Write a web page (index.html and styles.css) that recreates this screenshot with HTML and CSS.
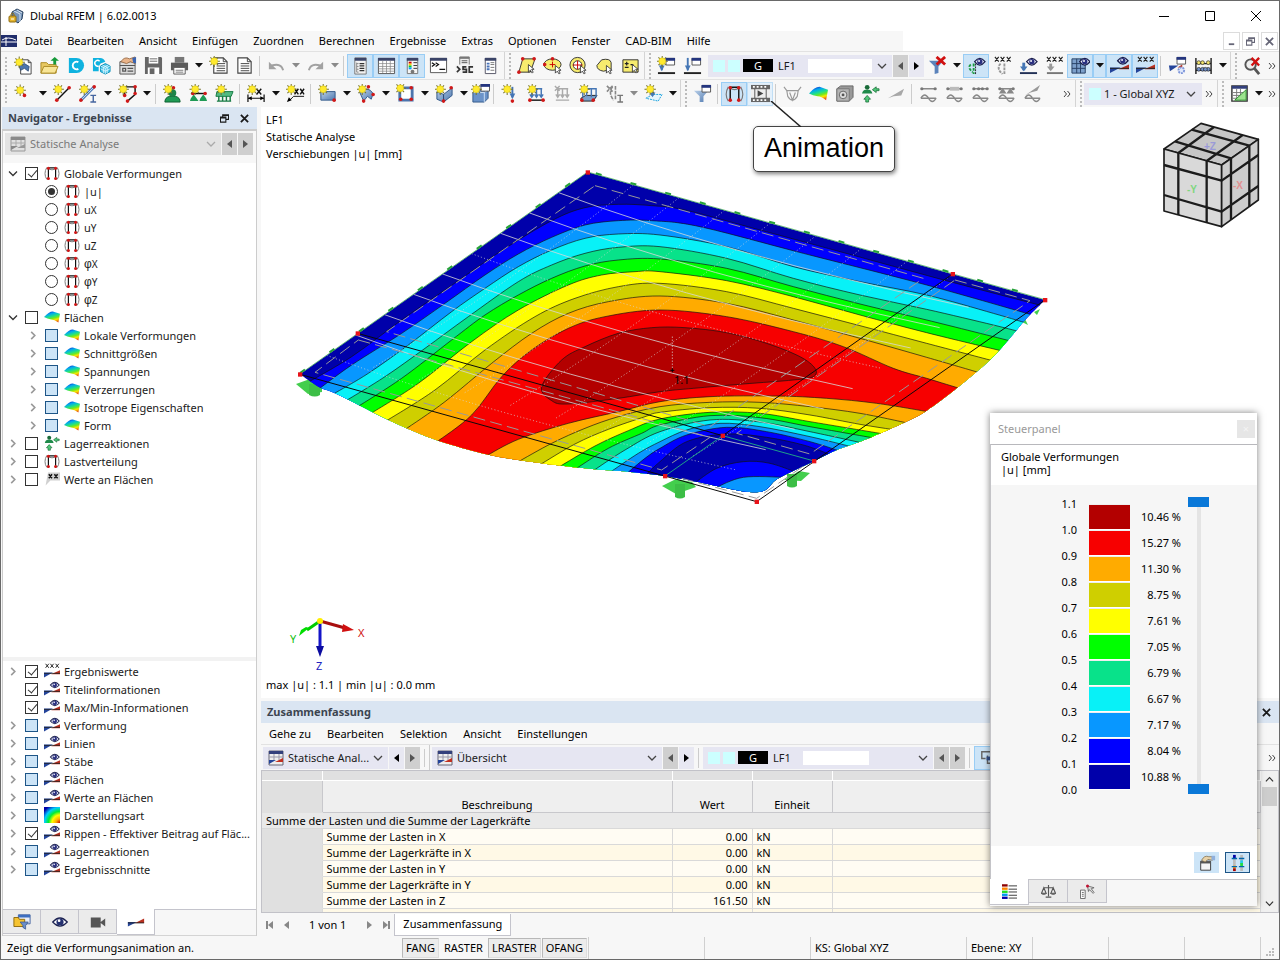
FILE: index.html
```html
<!DOCTYPE html>
<html lang="de">
<head>
<meta charset="utf-8">
<title>Dlubal RFEM | 6.02.0013</title>
<link rel="stylesheet" href="styles.css">
</head>
<body>
<svg class="defs" aria-hidden="true">
  <defs>
    <linearGradient id="steel" x1="0" y1="0" x2="1" y2="1"><stop offset="0" stop-color="#b9cfe8"/><stop offset="1" stop-color="#4f79b0"/></linearGradient>
    <linearGradient id="rain" x1=".3" y1="0" x2=".7" y2="1"><stop offset="0" stop-color="#1030c8"/><stop offset=".22" stop-color="#00a8f0"/><stop offset=".45" stop-color="#1fe08a"/><stop offset=".62" stop-color="#6fe820"/><stop offset=".78" stop-color="#f8e800"/><stop offset="1" stop-color="#e84a10"/></linearGradient>
    <radialGradient id="rainr" cx="1" cy="1" r="1.25"><stop offset="0" stop-color="#c00"/><stop offset=".2" stop-color="#fa0"/><stop offset=".4" stop-color="#ff0"/><stop offset=".58" stop-color="#0e3"/><stop offset=".78" stop-color="#0cf"/><stop offset="1" stop-color="#00a"/></radialGradient>
    <g id="star"><path d="M5.500-.5v12M-.5 5.500h12M1.500 1.500l8 8M9.500 1.500l-8 8" stroke="#77732f" stroke-width="1.100"/><circle cx="5.500" cy="5.500" r="3.600" fill="#ffea2e" stroke="#d8c51a" stroke-width=".6"/></g>
    <g id="eye"><path d="M0 4Q5.500-3 11 4Q5.500 11 0 4z" fill="#e6e9f8" stroke="#1b1f4c" stroke-width="1.300"/><circle cx="5.500" cy="4" r="2.800" fill="#2a3080"/><circle cx="4.700" cy="3.200" r="1" fill="#fff"/></g>
    <g id="win"><path d="M.5.5h9v7h-9z" fill="#fff" stroke="#555"/><path d="M0 0h10v3H0z" fill="#24357e"/></g>
    <g id="cur"><path d="M0 0v8l2-2 2 3 1-1-1.500-3H6z" fill="#fff" stroke="#333" stroke-width=".9"/></g>
    <g id="rd"><circle r="1.900" fill="#d01818"/></g>
  </defs>
  <symbol id="i-app" viewBox="0 0 16 16"><path d="M4 4l5-3 6 3-1 7-4 4-6-4z" fill="#7694b8" stroke="#27405f"/><path d="M6 3l6 3v8M9 2l5 3" fill="none" stroke="#d6e3f1"/><rect x="1" y="8" width="7" height="6" rx="1" fill="#e4b52e" stroke="#8d6a10"/><path d="M3 8V6q1.500-2 3 0v2" fill="none" stroke="#8d6a10"/><path d="M3 11h3" stroke="#fff"/></symbol>
  <symbol id="i-mdi" viewBox="0 0 16 12"><path d="M0 0h16v12H0z" fill="#202d6b"/><path d="M0 7h16M5 2v9M1 5q6-4 14 0" fill="none" stroke="#fff" stroke-width="1"/></symbol>
  <symbol id="i-new" viewBox="0 0 20 20"><path d="M7 4h8l3 3v12H7z" fill="#fff" stroke="#444"/><path d="M15 4v3h3" fill="none" stroke="#444"/><path d="M5 10l6-2 5 3-1 5-4-3-4 2z" fill="#4c75ad" stroke="#27466f" stroke-width=".8"/><use href="#star" x="0" y="1"/></symbol>
  <symbol id="i-open" viewBox="0 0 20 20"><path d="M1 18V7h6l2 2h8v9z" fill="#e8c963" stroke="#ab8a24"/><path d="M1 18l3-7h15l-3 7z" fill="#f8e596" stroke="#ab8a24"/><path d="M14 9V5h-3l4.500-4L20 5h-3v4z" fill="#169a3a"/></symbol>
  <symbol id="i-dl" viewBox="0 0 20 20"><path d="M3 2h8a8 8 0 0 1 0 16H3z" fill="#0fb2df"/><path d="M13 6.500a4 4 0 1 0 0 7" fill="none" stroke="#fff" stroke-width="2"/></symbol>
  <symbol id="i-dlc" viewBox="0 0 20 20"><path d="M1 2h7a6 6 0 0 1 6 4L9 8l-2 3v5H1z" fill="#0fb2df"/><path d="M8 5.500a3 3 0 1 0-1 5" fill="none" stroke="#fff" stroke-width="1.500"/><path d="M14 8l5 2.500v6L14 19l-5-2.500v-6z" fill="#4cc6ea" stroke="#0a8fb8"/><path d="M9 10.500l5 2.500 5-2.500M14 13v6M11 9.500l5 2.500v6M17 9.500l-5 2.500v6M9 13.500l5 2.500 5-2.500" fill="none" stroke="#e9faff" stroke-width=".8"/></symbol>
  <symbol id="i-block" viewBox="0 0 20 20"><path d="M2 6h16v13H2z" fill="#ddd" stroke="#555"/><path d="M2 10h16M5 13h3v3H5zM10 13h6M10 16h6" fill="none" stroke="#555" stroke-width="1.300"/><path d="M3 6Q7 0 12 3l6-2v7l-5-2-4 2z" fill="#e9b48a" stroke="#8a5a34" stroke-width=".8"/><path d="M15 2l4-1v7l-3-1z" fill="#3a65b2"/></symbol>
  <symbol id="i-save" viewBox="0 0 20 20"><path d="M1 1h17l1 1v17H1z" fill="#666"/><path d="M5 1h10v7H5zM4 12h12v7H4z" fill="#fff"/><path d="M6 3h8M6 5.500h8" stroke="#666"/><path d="M6 13h5v6H6z" fill="#666"/></symbol>
  <symbol id="i-print" viewBox="0 0 20 20"><path d="M5 1h10v6H5z" fill="#777"/><path d="M1 7h18v8H1z" fill="#5b5b5b"/><path d="M4 12h12v7H4z" fill="#fff" stroke="#5b5b5b"/><path d="M6 15h8M6 17h8" stroke="#777"/></symbol>
  <symbol id="i-rep" viewBox="0 0 20 20"><path d="M3 2h10l4 4v12H3z" fill="#fff" stroke="#444" stroke-width="1.200"/><path d="M13 2v4h4M6 8h9M6 10.500h9M6 13h9M6 15.500h9" fill="none" stroke="#444"/></symbol>
  <symbol id="i-newrep" viewBox="0 0 20 20"><use href="#i-rep" x="2" width="20" height="20"/><use href="#star" y="0"/></symbol>
  <symbol id="i-undo" viewBox="0 0 20 20"><path d="M17 15Q15 7 5 10" fill="none" stroke="#a2a2a2" stroke-width="2"/><path d="M2 6v8h8z" fill="#a2a2a2"/></symbol>
  <symbol id="i-redo" viewBox="0 0 20 20"><path d="M3 15Q5 7 15 10" fill="none" stroke="#a2a2a2" stroke-width="2"/><path d="M18 6v8h-8z" fill="#a2a2a2"/></symbol>
  <symbol id="i-nav" viewBox="0 0 20 20"><path d="M4 2h12v17H4z" fill="#f2f2f2" stroke="#777"/><path d="M4 2h12v3H4z" fill="#3b4468"/><path d="M6 7v10M6 8h2M6 11h2M6 14h2M6 17h2" stroke="#888"/><path d="M9 8h5M9 10.500h5M9 13h5M9 15.500h5" stroke="#333" stroke-width="1.300"/></symbol>
  <symbol id="i-tbl" viewBox="0 0 20 20"><path d="M1.500 2.500h17v16h-17z" fill="#fff" stroke="#555"/><path d="M1 2h18v3H1z" fill="#3b4468"/><path d="M2 8h16M2 11h16M2 13.500h16M2 16h16M6 5v13M10 5v13M14 5v13" stroke="#888" stroke-width=".8"/></symbol>
  <symbol id="i-pan" viewBox="0 0 20 20"><path d="M4.500 2.500h11v16h-11z" fill="#f4f4f4" stroke="#777"/><path d="M4 2h12v3H4z" fill="#3b4468"/><path d="M6 6h3v2H6z" fill="#c00"/><path d="M6 8h3v2H6z" fill="#fc0"/><path d="M6 10h3v2H6z" fill="#0c3"/><path d="M6 12h3v2H6z" fill="#09f"/><path d="M11 7h4M11 10h4M11 13h4" stroke="#333"/><circle cx="10" cy="16.500" r="2" fill="#777"/></symbol>
  <symbol id="i-con" viewBox="0 0 20 20"><path d="M1.500 2.500h17v15h-17z" fill="#fff" stroke="#555"/><path d="M1 2h18v3H1z" fill="#3b4468"/><path d="M3 7l3 2-3 2M7 7l3 2-3 2M11 14h6" fill="none" stroke="#111" stroke-width="1.300"/></symbol>
  <symbol id="i-sc" viewBox="0 0 20 20"><path d="M5 1h10v9H5z" fill="#eee" stroke="#777"/><path d="M5 1h10v2H5z" fill="#777"/><path d="M7 5h6M7 7h6" stroke="#555"/><path d="M0 9h20v10H0z" fill="#f4f4f4"/><path d="M2 11l3 3-3 3M12 11.500H8.500v2.500H12v3H8M19 11.500h-4V17h4" fill="none" stroke="#333" stroke-width="1.800"/></symbol>
  <symbol id="i-list" viewBox="0 0 20 20"><path d="M4.500 2.500h11v16h-11z" fill="#fff" stroke="#556"/><path d="M4 2h12v3H4z" fill="#3b4468"/><path d="M6 8h3M6 11h3M6 14h3" stroke="#4973b8" stroke-width="2"/><path d="M10 7h4M10 9h4M10 12h4M10 15h4" stroke="#777"/></symbol>
  <symbol id="i-s1" viewBox="0 0 20 20"><path d="M6 3h13l-5 14H2z" fill="#f7ec6e" stroke="#333"/><use href="#rd" x="6" y="3"/><use href="#rd" x="18" y="3"/><use href="#rd" x="2" y="17"/><use href="#cur" x="12" y="9"/></symbol>
  <symbol id="i-s2" viewBox="0 0 20 20"><ellipse cx="10" cy="9" rx="9" ry="6" fill="#f7ec6e" stroke="#333"/><path d="M7 9h6M10 6v6" stroke="#c00"/><use href="#rd" x="10" y="3"/><use href="#rd" x="1.800" y="9"/><use href="#cur" x="13" y="10"/></symbol>
  <symbol id="i-s3" viewBox="0 0 20 20"><circle cx="9" cy="9.500" r="8" fill="#f7ec6e" stroke="#333"/><circle cx="9" cy="9.500" r="4.500" fill="#fff" stroke="#333"/><path d="M4 9.500h10M9 5v9" stroke="#c00"/><use href="#cur" x="12" y="10"/></symbol>
  <symbol id="i-s4" viewBox="0 0 20 20"><path d="M2 10l5-6q9-2 10 3v7l-8 2q-7-1-7-6z" fill="#f7ec6e" stroke="#333"/><use href="#cur" x="12" y="10"/></symbol>
  <symbol id="i-s5" viewBox="0 0 20 20"><path d="M2 4h16v13H2z" fill="#f7ec6e" stroke="#333"/><path d="M4 8h4M6 6v4M4 12h4M10 9h3" stroke="#222" stroke-width="1.300"/><use href="#cur" x="12" y="9"/></symbol>
  <symbol id="i-ld" viewBox="0 0 20 20"><path d="M1 18h18" stroke="#222" stroke-width="2"/><path d="M5 2v13" stroke="#4576b5" stroke-width="2"/><path d="M2 10h6l-3 6z" fill="#4576b5"/><use href="#win" x="9" y="2"/></symbol>
  <symbol id="i-ldn" viewBox="0 0 20 20"><use href="#i-ld" width="20" height="20"/><use href="#star" y="0"/></symbol>
  <symbol id="i-fx" viewBox="0 0 20 20"><path d="M1 5h15l-5 6v7l-4 1v-8z" fill="#5b83bb"/><path d="M9 1l9 8M18 1L9 9" stroke="#d01010" stroke-width="3"/></symbol>
  <symbol id="i-f" viewBox="0 0 20 20"><path d="M1 7h15l-5 6v6H7v-6z" fill="url(#steel)"/><use href="#win" x="9" y="1"/></symbol>
  <symbol id="i-em" viewBox="0 0 20 20"><path d="M4 9q-4 3 2 8M7 8v11" fill="none" stroke="#1a9a40" stroke-width="2" stroke-dasharray="3 1.500"/><path d="M9 8v11" stroke="#222" stroke-dasharray="2 1"/><use href="#eye" x="8" y="2"/></symbol>
  <symbol id="x3" viewBox="0 0 20 7"><path d="M2 1l4 5M6 1L2 6M8 1l4 5M12 1L8 6M14.500 1l4 5M18.500 1l-4 5" stroke="#222" stroke-width="1.200"/></symbol>
  <symbol id="i-xm" viewBox="0 0 20 20"><use href="#x3" width="20" height="7"/><path d="M8 8q-5 5 2 11M12 8v11" fill="none" stroke="#999" stroke-width="2" stroke-dasharray="3 1"/></symbol>
  <symbol id="i-el" viewBox="0 0 20 20"><path d="M1 18h18" stroke="#223056" stroke-width="2"/><path d="M5 7v8" stroke="#4576b5" stroke-width="3"/><path d="M1 11h8l-4 5z" fill="#4576b5"/><use href="#eye" x="8" y="2"/></symbol>
  <symbol id="i-xl" viewBox="0 0 20 20"><use href="#x3" width="20" height="7"/><path d="M2 18h17" stroke="#777" stroke-width="2"/><path d="M6 8v6" stroke="#999" stroke-width="3"/><path d="M2 11h8l-4 5z" fill="#999"/></symbol>
  <symbol id="i-ge" viewBox="0 0 20 20"><path d="M1 3h14v15H1z" fill="#7ca0cb" stroke="#274064"/><path d="M1 8h14M1 13h14M6 3v15M10 3v15" stroke="#274064"/><use href="#eye" x="9" y="2"/></symbol>
  <symbol id="i-re" viewBox="0 0 20 20"><path d="M0 12h11l-11 6z" fill="#24449a"/><path d="M9 14l11-5v5z" fill="#b83020"/><path d="M0 13h20" stroke="#222"/><use href="#eye" x="8" y="1"/></symbol>
  <symbol id="i-rx" viewBox="0 0 20 20"><path d="M0 12h11l-11 6z" fill="#24449a"/><path d="M9 14l11-5v5z" fill="#b83020"/><path d="M0 13h20" stroke="#222"/><use href="#x3" y="0" width="20" height="7"/></symbol>
  <symbol id="i-tri" viewBox="0 0 20 20"><path d="M1 10h10L1 15z" fill="#24449a"/><path d="M9 11l10-5v5z" fill="#b83020"/><path d="M1 11h18" stroke="#222"/></symbol>
  <symbol id="i-wiz" viewBox="0 0 20 20"><use href="#win" x="9" y="1"/><path d="M1 10h10l-9 6z" fill="#24449a"/><path d="M10 12l5-3v3z" fill="#b83020"/><circle cx="14" cy="15" r="3" fill="#dfe8fb" stroke="#7e96da" stroke-width="2" stroke-dasharray="2 1"/></symbol>
  <symbol id="i-aba" viewBox="0 0 20 20"><path d="M2 2v17M18 2v17M2 8h16M2 15h16" stroke="#222" stroke-width="1.500"/><g stroke="#222" stroke-width=".7"><g fill="#f2e36a"><circle cx="5" cy="7" r="2"/><circle cx="9" cy="7" r="2"/><circle cx="15" cy="7" r="2"/></g><g fill="#7190c8"><circle cx="5" cy="14" r="2"/><circle cx="9" cy="14" r="2"/><circle cx="15" cy="14" r="2"/><circle cx="12" cy="14" r="2"/></g></g></symbol>
  <symbol id="i-mag" viewBox="0 0 20 20"><circle cx="8" cy="9" r="5.500" fill="#eee" stroke="#555" stroke-width="2"/><path d="M12 13l5 6" stroke="#555" stroke-width="3"/><path d="M9 2l8 8M17 2L9 10" stroke="#d01010" stroke-width="2.500"/></symbol>

  <symbol id="i-n" viewBox="0 0 20 20"><use href="#star" x="1" y="1"/><use href="#rd" x="11" y="12"/></symbol>
  <symbol id="i-l" viewBox="0 0 20 20"><path d="M4 17L17 4" stroke="#111" stroke-width="1.500"/><use href="#rd" x="4" y="17"/><use href="#rd" x="17" y="4"/><use href="#star" y="0"/></symbol>
  <symbol id="i-m" viewBox="0 0 20 20"><path d="M2 17L16 3" stroke="#4e7cba" stroke-width="3"/><path d="M2 17L16 3" stroke="#cfe0f5"/><use href="#rd" x="16" y="3"/><use href="#rd" x="2" y="17"/><path d="M12 12h6M15 12v7M12 19h6" stroke="#4565a0" stroke-width="1.500"/><use href="#star" y="0"/></symbol>
  <symbol id="i-p" viewBox="0 0 20 20"><path d="M7 12V3h11v8l-8 7" fill="none" stroke="#111" stroke-width="1.500"/><use href="#rd" x="7" y="12"/><use href="#rd" x="18" y="3"/><use href="#rd" x="18" y="10"/><use href="#rd" x="10" y="18"/><use href="#star" y="0"/></symbol>
  <symbol id="i-u1" viewBox="0 0 20 20"><path d="M2 19q0-5 5-6h6q5 1 5 6z" fill="#1f9a55" stroke="#0c5e30"/><circle cx="10" cy="9.500" r="4" fill="#1d8449"/><use href="#rd" x="11" y="4"/><use href="#star" y="0"/></symbol>
  <symbol id="i-u2" viewBox="0 0 20 20"><path d="M2 10h16" stroke="#111" stroke-width="1.500"/><path d="M5 11l3 4 2 3H1l1-3zM15 11l3 4 1 3h-8l1-3z" fill="#1f9a55"/><use href="#rd" x="4" y="10"/><use href="#rd" x="17" y="10"/><use href="#star" x="1"/></symbol>
  <symbol id="i-u3" viewBox="0 0 20 20"><path d="M2 8h17l-2 5H1z" fill="#53bb82" stroke="#167a43"/><path d="M4 13v5M8 13v5M12 13v5M16 13v5M2 18h15" stroke="#167a43" stroke-width="1.500"/><use href="#star" x="1"/></symbol>
  <symbol id="i-dim" viewBox="0 0 20 20"><path d="M1 11v8M18 11v8M1 15h17" stroke="#111" stroke-width="1.300"/><path d="M1 15l4-2v4zM18 15l-4-2v4z"/><path d="M10 5l5 6M15 5l-5 6" stroke="#111" stroke-width="1.500"/><use href="#star" x="0"/></symbol>
  <symbol id="i-xx" viewBox="0 0 20 20"><path d="M3 18L8 13h11" fill="none" stroke="#111"/><path d="M1 19l2-5 3 3z"/><path d="M9 5l4 6M13 5l-4 6M15 5l4 6M19 5l-4 6" stroke="#111" stroke-width="1.500"/><use href="#star" x="0"/></symbol>
  <symbol id="i-f1" viewBox="0 0 20 20"><path d="M3 8h15v9H3z" fill="url(#steel)" stroke="#33588a"/><use href="#rd" x="17" y="17"/><use href="#star" x="0" y="0"/></symbol>
  <symbol id="i-f2" viewBox="0 0 20 20"><path d="M3 9q8-8 14 1l-2 6-4-3-4 5z" fill="url(#steel)" stroke="#33588a"/><use href="#rd" x="12" y="3"/><use href="#rd" x="17" y="11"/><use href="#rd" x="7" y="18"/><use href="#star" y="0"/></symbol>
  <symbol id="i-f3" viewBox="0 0 20 20"><path d="M4 4h13v13H4z" fill="#fff" stroke="#4c75ad" stroke-width="3"/><use href="#rd" x="16" y="4"/><use href="#rd" x="16" y="16"/><use href="#rd" x="5" y="16"/><use href="#star" x="-1" y="-1"/></symbol>
  <symbol id="i-f4" viewBox="0 0 20 20"><path d="M2 8l7 3 9-7v8l-9 7-7-3z" fill="url(#steel)" stroke="#33588a"/><path d="M9 11v8" stroke="#24446f"/><use href="#rd" x="17" y="4"/><use href="#rd" x="9" y="18"/><use href="#star" y="0"/></symbol>
  <symbol id="i-f5" viewBox="0 0 20 20"><path d="M2 9l4-3h12v9l-4 4H2z" fill="#6b93c9" stroke="#33588a"/><path d="M2 9h12v10M14 9l4-3" fill="none" stroke="#cfe0f5"/><use href="#win" x="10" y="0"/><use href="#star" y="0"/></symbol>
  <symbol id="i-a1" viewBox="0 0 20 20"><path d="M12 3v11" stroke="#4576b5" stroke-width="2"/><path d="M9 10h6l-3 6z" fill="#4576b5"/><use href="#rd" x="12" y="18"/><use href="#star" x="1" y="0"/></symbol>
  <symbol id="i-a2" viewBox="0 0 20 20"><path d="M3 17h14" stroke="#111" stroke-width="1.500"/><path d="M4 5h12M5 5v8M10 5v8M15 5v8M3 11l2 3 2-3M8 11l2 3 2-3M13 11l2 3 2-3" fill="none" stroke="#4576b5" stroke-width="1.500"/><use href="#rd" x="3" y="17"/><use href="#rd" x="17" y="17"/><use href="#star" y="0"/></symbol>
  <symbol id="i-a3" viewBox="0 0 20 20"><path d="M3 17h14M4 5h12M5 5v8M10 5v8M15 5v8M3 11l2 3 2-3M8 11l2 3 2-3M13 11l2 3 2-3M2 2l5 5M7 2L2 7" fill="none" stroke="#aaa" stroke-width="1.500"/></symbol>
  <symbol id="i-a4" viewBox="0 0 20 20"><path d="M2 15l5-3h12l-4 6H3z" fill="#7ca0cb" stroke="#222"/><path d="M4 5h14v9M8 5v8M13 5v9M4 5v9" fill="none" stroke="#4576b5" stroke-width="1.500"/><use href="#rd" x="3" y="17"/><use href="#rd" x="15" y="17"/><use href="#star" y="0"/></symbol>
  <symbol id="i-a5" viewBox="0 0 20 20"><path d="M8 3q-5 6 1 14M11 2v15M2 2l6 6M8 2L2 8" fill="none" stroke="#888" stroke-width="1.700" stroke-dasharray="4 1"/><path d="M13 12h6M16 12v7M13 19h6" stroke="#777" stroke-width="1.500"/></symbol>
  <symbol id="i-a6" viewBox="0 0 20 20"><path d="M2 15l7-4h10l-4 7z" fill="#e6f5fd" stroke="#16a0dd" stroke-dasharray="2 1"/><path d="M9 4v8" stroke="#4576b5" stroke-width="2"/><path d="M6 9h6l-3 5z" fill="#4576b5"/><use href="#star" x="1" y="0"/></symbol>
  <symbol id="i-def" viewBox="0 0 20 20"><path d="M5.500 18V3.500h9V18" fill="none" stroke="#111" stroke-width="1.500"/><path d="M3.500 3Q-1 11 3.500 18M16.500 3q4.500 8 0 15M5 4q5 4 10 0" fill="none" stroke="#777" stroke-width="1.200"/><use href="#rd" x="5.500" y="4"/><use href="#rd" x="14.500" y="4"/><use href="#rd" x="5.500" y="17"/><use href="#rd" x="14.500" y="17"/></symbol>
  <symbol id="i-film" viewBox="0 0 20 20"><path d="M0 1h20v18H0z" fill="#666"/><path d="M2 3h2M6 3h2M10 3h2M14 3h2M2 17h2M6 17h2M10 17h2M14 17h2" stroke="#fff" stroke-width="2"/><path d="M0 5.500h20v9H0z" fill="#eee"/><path d="M4 5v10M16 5v10" stroke="#555"/><path d="M7 6.500v7l6-3.500z" fill="#444"/></symbol>
  <symbol id="i-dg" viewBox="0 0 20 20"><path d="M1 3l3 4h12l3-4M4 7l1 6q5 8 10 0l1-6M7 9l3 8 3-8" fill="none" stroke="#999" stroke-width="1.200"/></symbol>
  <symbol id="i-rain" viewBox="0 0 20 20"><path d="M0 10Q6 3 11 3L20 6l-2 11q-5-4-9-4-5-1-9-3z" fill="url(#rain)"/></symbol>
  <symbol id="i-rr" viewBox="0 0 20 20"><path d="M0 0h20v20H0z" fill="url(#rainr)"/></symbol>
  <symbol id="i-die" viewBox="0 0 20 20"><path d="M2 5l4-3h13v12l-4 4H2z" fill="#999" stroke="#666"/><path d="M2 5h13v13H2z" fill="#b4b4b4" stroke="#777"/><circle cx="8.500" cy="11.500" r="4" fill="#ddd" stroke="#666"/><circle cx="8.500" cy="11.500" r="1.500" fill="#555"/></symbol>
  <symbol id="i-rc" viewBox="0 0 20 20"><path d="M1 10q1-4 4-4h3q3 0 4 4z" fill="#1f8a4a"/><circle cx="6.500" cy="3.500" r="2.500" fill="#196b39"/><path d="M5 19v-3H3l3.500-4 3.500 4H8v3z" fill="#4fc878" stroke="#156c35" stroke-width=".8"/><path d="M19 5h-3V3l-4 3 4 3V7h3z" fill="#4fc878" stroke="#156c35" stroke-width=".8"/></symbol>
  <symbol id="i-wg" viewBox="0 0 20 20"><path d="M1 15L18 5l-3 7-8 1z" fill="#a8a8a8"/></symbol>
  <symbol id="i-g1" viewBox="0 0 20 20"><path d="M3 5h14M2 15h16" stroke="#888" stroke-width="1.500"/><circle cx="3" cy="5" r="1.700" fill="#777"/><circle cx="17" cy="5" r="1.700" fill="#777"/><path d="M2 15q4-7 8 0t8 0" fill="none" stroke="#888" stroke-width="1.500"/></symbol>
  <symbol id="i-g2" viewBox="0 0 20 20"><use href="#i-g1" width="20" height="20"/><path d="M5 5h10" stroke="#bbb" stroke-width="4"/></symbol>
  <symbol id="i-g3" viewBox="0 0 20 20"><use href="#i-g1" width="20" height="20"/><circle cx="8" cy="5" r="1.700" fill="#777"/><circle cx="12" cy="5" r="1.700" fill="#777"/></symbol>
  <symbol id="i-g4" viewBox="0 0 20 20"><use href="#i-g1" width="20" height="20"/><path d="M6 4l4 6H2zM14 4l4 6h-8z" fill="#888"/></symbol>
  <symbol id="i-g5" viewBox="0 0 20 20"><path d="M2 12L18 1l-3 6-7 2z" fill="#999"/><path d="M2 15h16M2 15q4-7 8 0t8 0" fill="none" stroke="#888" stroke-width="1.500"/></symbol>
  <symbol id="i-ch" viewBox="0 0 20 20"><path d="M2 2h16v16H2z" fill="#fff" stroke="#333" stroke-width="1.500"/><path d="M2 2h16v3H2z" fill="#33407c"/><path d="M3 9h14M3 12h14M3 15h14M7 5v13M11 5v13" stroke="#777"/><path d="M5 17h12V6z" fill="#9be48d" stroke="#2c8a2c"/></symbol>
  <symbol id="i-res" viewBox="0 0 16 16"><path d="M1 1h14v14H1z" fill="#eee" stroke="#667"/><path d="M1 1h14v3H1z" fill="#33407c"/><path d="M1 7h14M6 4v6M11 4v6" stroke="#99a"/><path d="M1 14V10h7z" fill="#24449a"/><path d="M7 12l8-4v4z" fill="#c03020"/></symbol>
  <symbol id="i-resg" viewBox="0 0 16 16"><path d="M1 1h14v14H1z" fill="#e0e0e0" stroke="#999"/><path d="M1 1h14v3H1z" fill="#8a8a8a"/><path d="M1 7h14M6 4v6M11 4v6" stroke="#aaa"/><path d="M1 14V10h7z" fill="#888"/><path d="M7 12l8-4v4z" fill="#999"/></symbol>
  <symbol id="i-val" viewBox="0 0 20 20"><path d="M5 2h15v10H8l-6 6z" fill="#d0d0d0"/><path d="M6 4l4 5M10 4L6 9M13 4l4 5M17 4l-4 5" stroke="#111" stroke-width="1.800"/></symbol>
  <symbol id="i-t1" viewBox="0 0 20 20"><path d="M6 2h13v10H6z" fill="#e9eef8" stroke="#3d5f9c"/><path d="M6 2h13v3H6z" fill="#3d6ec0"/><path d="M1 5h5l1 2h6v8H1z" fill="#f5c331" stroke="#8a6508"/><path d="M8 10h9l-3 4v4l-3-2v-2z" fill="#6c8fca" stroke="#35548c" stroke-width=".8"/></symbol>
  <symbol id="i-t2" viewBox="0 0 20 20"><path d="M2 10q8-9 16 0q-8 9-16 0z" fill="#fff" stroke="#1b2150" stroke-width="1.500"/><circle cx="10" cy="10" r="4" fill="#243070"/><circle cx="9" cy="8.500" r="1.500" fill="#fff"/></symbol>
  <symbol id="i-t3" viewBox="0 0 20 20"><path d="M2 5h11v11H2zM13 10l5-4v9l-5-4z" fill="#555"/></symbol>
  <symbol id="i-leg" viewBox="0 0 16 16"><path d="M0 1.500h6" stroke="#8c0000" stroke-width="2.500"/><path d="M0 5h6" stroke="#f80" stroke-width="2.500"/><path d="M0 8.300h6" stroke="#2d2" stroke-width="2.500"/><path d="M0 11.500h6" stroke="#09e" stroke-width="2.500"/><path d="M0 14.700h6" stroke="#00a" stroke-width="2.500"/><path d="M7 2h9M7 5.500h9M7 8.500h9M7 12h9M7 15h9" stroke="#333"/></symbol>
  <symbol id="i-bal" viewBox="0 0 16 16"><path d="M8 1v12M5 14h6M3 4h10M3 4l-2.500 6h5zM13 4l-2.500 6h5z" fill="none" stroke="#555" stroke-width="1.200"/><path d="M0 10h6q-3 3.500-6 0zM10 10h6q-3 3.500-6 0z" fill="#777"/></symbol>
  <symbol id="i-flt" viewBox="0 0 16 16"><path d="M.5 6.500h5v9h-5zM2 9h2M2 11h2M2 13h2" fill="#fff" stroke="#666"/><path d="M8 2l7 2-3 1 3 4-1 1-4-4-1 2z" fill="#ddd" stroke="#555" stroke-width=".8"/><circle cx="8" cy="2" r="1.600" fill="#c01030"/></symbol>
  <symbol id="i-hand" viewBox="0 0 20 20"><path d="M3 8h11v10H3z" fill="#f5f5f5" stroke="#333"/><path d="M3 8h11v2.500H3z" fill="#555"/><path d="M4 7q3-6 8-4h4v4l-5-1-3 3z" fill="#e8d2a8" stroke="#7b6846" stroke-width=".8"/><path d="M15 2h4v5h-4z" fill="#8fb0dd"/></symbol>
  <symbol id="i-sld" viewBox="0 0 20 20"><path d="M6 1v18M14 1v18" stroke="#bbb" stroke-width="3"/><path d="M6 1v4" stroke="#00a" stroke-width="3"/><path d="M6 13v3" stroke="#f90" stroke-width="3"/><path d="M6 16v3" stroke="#a00" stroke-width="3"/><path d="M14 7v4" stroke="#2ce" stroke-width="3"/><path d="M14 10v4" stroke="#2d4" stroke-width="3"/><path d="M3 5h6M3 14h6M11 5h6M11 14h6" stroke="#06a" stroke-width="1.500"/></symbol>
  <symbol id="chev-d" viewBox="0 0 10 6"><path d="M1 1l4 4 4-4" fill="none" stroke="currentColor" stroke-width="1.300"/></symbol>
  <symbol id="chev-r" viewBox="0 0 6 10"><path d="M1 1l4 4-4 4" fill="none" stroke="currentColor" stroke-width="1.800"/></symbol>
  <symbol id="dd" viewBox="0 0 8 5"><path d="M0 0h8L4 4.500z" fill="currentColor"/></symbol>
  <symbol id="al" viewBox="0 0 5 8"><path d="M5 0v8L0 4z" fill="currentColor"/></symbol>
  <symbol id="ar" viewBox="0 0 5 8"><path d="M0 0v8l5-4z" fill="currentColor"/></symbol>
  <symbol id="xx" viewBox="0 0 10 10"><path d="M1 1l8 8M9 1L1 9" stroke="currentColor" stroke-width="2"/></symbol>
  <symbol id="rest" viewBox="0 0 10 10"><path d="M3 3V1h6.500v5H7M.500 3.500h6v5.500h-6zM.500 4.500h6M3 1.500h6.500" fill="none" stroke="currentColor" stroke-width="1.200"/></symbol>
  <symbol id="more" viewBox="0 0 8 8"><path d="M1 1l2.500 3L1 7M4.500 1L7 4 4.500 7" fill="none" stroke="#444"/></symbol>
</svg>

<div class="window">
  <header class="titlebar">
    <svg class="i16"><use href="#i-app"/></svg>
    <h1>Dlubal RFEM | 6.02.0013</h1>
    <div class="winbtns">
      <button aria-label="Minimieren"><svg viewBox="0 0 12 12"><path d="M1 6.500h10" stroke="#000"/></svg></button>
      <button aria-label="Maximieren"><svg viewBox="0 0 12 12"><path d="M1.500 1.500h9v9h-9z" fill="none" stroke="#000"/></svg></button>
      <button aria-label="Schließen"><svg viewBox="0 0 12 12"><path d="M1 1l10 10M11 1L1 11" stroke="#000"/></svg></button>
    </div>
  </header>

  <nav class="menubar">
    <div class="menus">
      <svg class="mdi"><use href="#i-mdi"/></svg>
      <button>Datei</button><button>Bearbeiten</button><button>Ansicht</button><button>Einfügen</button><button>Zuordnen</button><button>Berechnen</button><button>Ergebnisse</button><button>Extras</button><button>Optionen</button><button>Fenster</button><button>CAD-BIM</button><button>Hilfe</button>
    </div>
    <div class="mdibtns">
      <button aria-label="Fenster minimieren"><svg viewBox="0 0 10 10"><path d="M2 8h6" stroke="#667" stroke-width="2"/></svg></button>
      <button aria-label="Fenster wiederherstellen"><svg><use href="#rest"/></svg></button>
      <button aria-label="Fenster schließen"><svg><use href="#xx"/></svg></button>
    </div>
  </nav>

  <div class="toolbar">
    <i class="grip"></i>
    <button class="tb"><svg><use href="#i-new"/></svg></button><button class="tb"><svg><use href="#i-open"/></svg></button><button class="tb"><svg><use href="#i-dl"/></svg></button><button class="tb"><svg><use href="#i-dlc"/></svg></button><button class="tb"><svg><use href="#i-block"/></svg></button><button class="tb"><svg><use href="#i-save"/></svg></button><button class="tb"><svg><use href="#i-print"/></svg></button><button class="dd"><svg><use href="#dd"/></svg></button><button class="tb"><svg><use href="#i-newrep"/></svg></button><button class="tb"><svg><use href="#i-rep"/></svg></button>
    <i class="sep"></i>
    <button class="tb"><svg><use href="#i-undo"/></svg></button><button class="dd dim"><svg><use href="#dd"/></svg></button><button class="tb"><svg><use href="#i-redo"/></svg></button><button class="dd dim"><svg><use href="#dd"/></svg></button>
    <i class="sep"></i>
    <button class="tb on"><svg><use href="#i-nav"/></svg></button><button class="tb on"><svg><use href="#i-tbl"/></svg></button><button class="tb on"><svg><use href="#i-pan"/></svg></button><button class="tb"><svg><use href="#i-con"/></svg></button><button class="tb"><svg><use href="#i-sc"/></svg></button><button class="tb"><svg><use href="#i-list"/></svg></button>
    <i class="sep grp"></i>
    <button class="tb"><svg><use href="#i-s1"/></svg></button><button class="tb"><svg><use href="#i-s2"/></svg></button><button class="tb"><svg><use href="#i-s3"/></svg></button><button class="tb"><svg><use href="#i-s4"/></svg></button><button class="tb"><svg><use href="#i-s5"/></svg></button>
    <i class="sep grp"></i>
    <button class="tb"><svg><use href="#i-ldn"/></svg></button><button class="tb"><svg><use href="#i-ld"/></svg></button>
    <div class="combo grow"><i class="cy"></i><i class="cy"></i><b class="tag">G</b><span class="lf">LF1</span><select class="blank" aria-label="Lastfall"><option></option></select><svg class="cv"><use href="#chev-d"/></svg></div>
    <button class="step off" aria-label="Zurück"><svg><use href="#al"/></svg></button><button class="step" aria-label="Weiter"><svg><use href="#ar"/></svg></button>
    <button class="tb"><svg><use href="#i-fx"/></svg></button><button class="dd"><svg><use href="#dd"/></svg></button>
    <button class="tb on"><svg><use href="#i-em"/></svg></button><button class="tb"><svg><use href="#i-xm"/></svg></button><button class="tb"><svg><use href="#i-el"/></svg></button><button class="tb"><svg><use href="#i-xl"/></svg></button><button class="tb on"><svg><use href="#i-ge"/></svg></button><button class="dd on"><svg><use href="#dd"/></svg></button><button class="tb on"><svg><use href="#i-re"/></svg></button><button class="tb on"><svg><use href="#i-rx"/></svg></button>
    <i class="sep"></i>
    <button class="tb"><svg><use href="#i-wiz"/></svg></button><button class="tb"><svg><use href="#i-aba"/></svg></button><button class="dd"><svg><use href="#dd"/></svg></button>
    <i class="sep grp"></i>
    <button class="tb"><svg><use href="#i-mag"/></svg></button><button class="more"><svg><use href="#more"/></svg></button>
  </div>

  <div class="toolbar">
    <i class="grip"></i>
    <button class="tb"><svg><use href="#i-n"/></svg></button><button class="dd"><svg><use href="#dd"/></svg></button><button class="tb"><svg><use href="#i-l"/></svg></button><button class="tb"><svg><use href="#i-m"/></svg></button><button class="dd"><svg><use href="#dd"/></svg></button><button class="tb"><svg><use href="#i-p"/></svg></button><button class="dd"><svg><use href="#dd"/></svg></button>
    <i class="sep"></i>
    <button class="tb"><svg><use href="#i-u1"/></svg></button><button class="tb"><svg><use href="#i-u2"/></svg></button><button class="tb"><svg><use href="#i-u3"/></svg></button>
    <i class="sep"></i>
    <button class="tb"><svg><use href="#i-dim"/></svg></button><button class="dd"><svg><use href="#dd"/></svg></button><button class="tb"><svg><use href="#i-xx"/></svg></button>
    <i class="sep"></i>
    <button class="tb"><svg><use href="#i-f1"/></svg></button><button class="dd"><svg><use href="#dd"/></svg></button><button class="tb"><svg><use href="#i-f2"/></svg></button><button class="dd"><svg><use href="#dd"/></svg></button><button class="tb"><svg><use href="#i-f3"/></svg></button><button class="dd"><svg><use href="#dd"/></svg></button><button class="tb"><svg><use href="#i-f4"/></svg></button><button class="dd"><svg><use href="#dd"/></svg></button><button class="tb narrow"><svg><use href="#i-f5"/></svg></button>
    <i class="sep"></i>
    <button class="tb"><svg><use href="#i-a1"/></svg></button><button class="tb"><svg><use href="#i-a2"/></svg></button><button class="tb"><svg><use href="#i-a3"/></svg></button><button class="tb"><svg><use href="#i-a4"/></svg></button><button class="tb"><svg><use href="#i-a5"/></svg></button><button class="dd dim"><svg><use href="#dd"/></svg></button><button class="tb"><svg><use href="#i-a6"/></svg></button><button class="dd"><svg><use href="#dd"/></svg></button>
    <i class="sep grp"></i>
    <button class="tb"><svg><use href="#i-f"/></svg></button>
    <i class="sep"></i>
    <button class="tb on"><svg><use href="#i-def"/></svg></button><button class="tb hover"><svg><use href="#i-film"/></svg></button>
    <i class="sep"></i>
    <button class="tb"><svg><use href="#i-dg"/></svg></button><button class="tb"><svg><use href="#i-rain"/></svg></button><button class="tb"><svg><use href="#i-die"/></svg></button><button class="tb"><svg><use href="#i-rc"/></svg></button><button class="tb"><svg><use href="#i-wg"/></svg></button>
    <i class="sep"></i>
    <button class="tb"><svg><use href="#i-g1"/></svg></button><button class="tb"><svg><use href="#i-g2"/></svg></button><button class="tb"><svg><use href="#i-g3"/></svg></button><button class="tb"><svg><use href="#i-g4"/></svg></button><button class="tb"><svg><use href="#i-g5"/></svg></button>
    <button class="more end"><svg><use href="#more"/></svg></button>
    <i class="sep grp"></i>
    <div class="combo cs"><i class="cy"></i><select aria-label="Koordinatensystem"><option>1 - Global XYZ</option></select><svg class="cv"><use href="#chev-d"/></svg></div>
    <button class="more"><svg><use href="#more"/></svg></button>
    <i class="sep grp"></i>
    <button class="tb"><svg><use href="#i-ch"/></svg></button><button class="dd"><svg><use href="#dd"/></svg></button><button class="more"><svg><use href="#more"/></svg></button>
  </div>

  <div class="work">
    <aside class="navigator">
      <div class="panelhead"><h2>Navigator - Ergebnisse</h2><button aria-label="Andocken"><svg><use href="#rest"/></svg></button><button aria-label="Schließen"><svg><use href="#xx"/></svg></button></div>
      <div class="navbody">
        <div class="navtool">
          <div class="combo grow disabled"><svg class="i16"><use href="#i-resg"/></svg><select aria-label="Analyse" disabled><option>Statische Analyse</option></select><svg class="cv"><use href="#chev-d"/></svg></div>
          <button class="step off" aria-label="Zurück"><svg><use href="#al"/></svg></button><button class="step off" aria-label="Weiter"><svg><use href="#ar"/></svg></button>
        </div>
        <ul class="tree upper">
          <li><svg class="tw open"><use href="#chev-d"/></svg><label><input type="checkbox" checked><svg class="ic"><use href="#i-def"/></svg>Globale Verformungen</label></li>
          <li class="sub"><label><input type="radio" name="u" checked><svg class="ic"><use href="#i-def"/></svg><span>|u|</span></label></li>
          <li class="sub"><label><input type="radio" name="u"><svg class="ic"><use href="#i-def"/></svg><span>u<small>X</small></span></label></li>
          <li class="sub"><label><input type="radio" name="u"><svg class="ic"><use href="#i-def"/></svg><span>u<small>Y</small></span></label></li>
          <li class="sub"><label><input type="radio" name="u"><svg class="ic"><use href="#i-def"/></svg><span>u<small>Z</small></span></label></li>
          <li class="sub"><label><input type="radio" name="u"><svg class="ic"><use href="#i-def"/></svg><span><i class="phi">φ</i><small>X</small></span></label></li>
          <li class="sub"><label><input type="radio" name="u"><svg class="ic"><use href="#i-def"/></svg><span><i class="phi">φ</i><small>Y</small></span></label></li>
          <li class="sub"><label><input type="radio" name="u"><svg class="ic"><use href="#i-def"/></svg><span><i class="phi">φ</i><small>Z</small></span></label></li>
          <li><svg class="tw open"><use href="#chev-d"/></svg><label><input type="checkbox"><svg class="ic"><use href="#i-rain"/></svg>Flächen</label></li>
          <li class="sub"><svg class="tw"><use href="#chev-r"/></svg><label><input type="checkbox" class="part"><svg class="ic"><use href="#i-rain"/></svg>Lokale Verformungen</label></li>
          <li class="sub"><svg class="tw"><use href="#chev-r"/></svg><label><input type="checkbox" class="part"><svg class="ic"><use href="#i-rain"/></svg>Schnittgrößen</label></li>
          <li class="sub"><svg class="tw"><use href="#chev-r"/></svg><label><input type="checkbox" class="part"><svg class="ic"><use href="#i-rain"/></svg>Spannungen</label></li>
          <li class="sub"><svg class="tw"><use href="#chev-r"/></svg><label><input type="checkbox" class="part"><svg class="ic"><use href="#i-rain"/></svg>Verzerrungen</label></li>
          <li class="sub"><svg class="tw"><use href="#chev-r"/></svg><label><input type="checkbox" class="part"><svg class="ic"><use href="#i-rain"/></svg>Isotrope Eigenschaften</label></li>
          <li class="sub"><svg class="tw"><use href="#chev-r"/></svg><label><input type="checkbox" class="part"><svg class="ic"><use href="#i-rain"/></svg>Form</label></li>
          <li><svg class="tw"><use href="#chev-r"/></svg><label><input type="checkbox"><svg class="ic"><use href="#i-rc"/></svg>Lagerreaktionen</label></li>
          <li><svg class="tw"><use href="#chev-r"/></svg><label><input type="checkbox"><svg class="ic"><use href="#i-def"/></svg>Lastverteilung</label></li>
          <li><svg class="tw"><use href="#chev-r"/></svg><label><input type="checkbox"><svg class="ic"><use href="#i-val"/></svg>Werte an Flächen</label></li>
        </ul>
        <ul class="tree lower">
          <li><svg class="tw"><use href="#chev-r"/></svg><label><input type="checkbox" checked><svg class="ic"><use href="#i-rx"/></svg>Ergebniswerte</label></li>
          <li class="leaf"><label><input type="checkbox" checked><svg class="ic"><use href="#i-re"/></svg>Titelinformationen</label></li>
          <li class="leaf"><label><input type="checkbox" checked><svg class="ic"><use href="#i-re"/></svg>Max/Min-Informationen</label></li>
          <li><svg class="tw"><use href="#chev-r"/></svg><label><input type="checkbox" class="part"><svg class="ic"><use href="#i-re"/></svg>Verformung</label></li>
          <li><svg class="tw"><use href="#chev-r"/></svg><label><input type="checkbox" class="part"><svg class="ic"><use href="#i-re"/></svg>Linien</label></li>
          <li><svg class="tw"><use href="#chev-r"/></svg><label><input type="checkbox" class="part"><svg class="ic"><use href="#i-re"/></svg>Stäbe</label></li>
          <li><svg class="tw"><use href="#chev-r"/></svg><label><input type="checkbox" class="part"><svg class="ic"><use href="#i-re"/></svg>Flächen</label></li>
          <li><svg class="tw"><use href="#chev-r"/></svg><label><input type="checkbox" class="part"><svg class="ic"><use href="#i-re"/></svg>Werte an Flächen</label></li>
          <li><svg class="tw"><use href="#chev-r"/></svg><label><input type="checkbox" class="part"><svg class="ic"><use href="#i-rr"/></svg>Darstellungsart</label></li>
          <li><svg class="tw"><use href="#chev-r"/></svg><label><input type="checkbox" checked><svg class="ic"><use href="#i-re"/></svg>Rippen - Effektiver Beitrag auf Fläc...</label></li>
          <li><svg class="tw"><use href="#chev-r"/></svg><label><input type="checkbox" class="part"><svg class="ic"><use href="#i-re"/></svg>Lagerreaktionen</label></li>
          <li><svg class="tw"><use href="#chev-r"/></svg><label><input type="checkbox" class="part"><svg class="ic"><use href="#i-re"/></svg>Ergebnisschnitte</label></li>
        </ul>
        <div class="navtabs"><button aria-label="Daten"><svg><use href="#i-t1"/></svg></button><button aria-label="Anzeigen"><svg><use href="#i-t2"/></svg></button><button aria-label="Ansichten"><svg><use href="#i-t3"/></svg></button><button class="active" aria-label="Ergebnisse"><svg><use href="#i-tri"/></svg></button></div>
      </div>
    </aside>

    <main class="main">
      <section class="view">
        <svg class="scene" viewBox="261 107 1018 591" role="img" aria-label="Verformte Platte">
          <defs><clipPath id="plate"><path id="platepath"/></clipPath></defs>
          <g fill="#2fc93a" opacity=".9">
            <path d="M296 384l14-5 12 7 0 6-14 2z"/><path d="M309 384h11v11q-5 3-11 0z" fill="#27b832"/>
            <path d="M662 486l14-7 16 3 4 5-20 7z"/><path d="M675 484h10v13q-5 3-10 0z" fill="#27b832"/>
            <path d="M784 480l15-9 11 2-9 8z"/><path d="M787 474h10v12q-5 3-10 0z" fill="#27b832"/>
            <path d="M1022 322l6 3-4-8zM1034 312l6-3-3 6z"/>
          </g>
          <g transform="translate(285 160) scale(.33333)">
            <g id="bands" clip-path="url(#plate)"></g>
            <g id="grid" clip-path="url(#plate)" fill="none" stroke="#d8d8d8" stroke-opacity=".8" stroke-width="3"></g>
            <g fill="none" stroke="#999" stroke-width="3" stroke-dasharray="36 16">
              <path d="M930 77L1915 355 1275 800 305 515z"/><path d="M220 540L1275 832 1130 930 90 637z"/><path d="M2010 360L2235 422 1575 882 1355 820z"/><path d="M1190 955L1415 1015 1560 915"/>
            </g>
            <g fill="none" stroke="#0a0a0a" stroke-width="3"><path d="M45 643L1415 1025 2280 420M218 520L1313 827 2003 342"/></g>
            <g fill="none" stroke="#1ea088" stroke-width="3"><path d="M1140 948L1313 827 1587 903"/></g>
            <g fill="none" stroke="#27a23a"><path d="M45 642L908 36 2280 419" stroke-width="2"/><path d="M45 639L908 33 2280 416" stroke-width="6" stroke-dasharray="18 90"/></g>
            <path d="M1162 530v100" stroke="#ddd" stroke-width="3" stroke-dasharray="3 6"/><path d="M1156 631h12M1162 625v12" stroke="#000" stroke-width="3"/>
            <g id="nodes" fill="#e8131a"></g>
          </g>
          <text x="674" y="384" class="t11">1.1</text>
          <g stroke-width="3"><path d="M320 621l25 7" stroke="#a80e0e"/><path d="M343 624l11 6-12 2z" fill="#d01010"/><path d="M320 621l-13 9" stroke="#0c0"/><path d="M309 628l-10 8 2-6 5-3z" fill="#0d0"/><path d="M320 621v27" stroke="#1414c8"/><path d="M316 646h8l-4 11z" fill="#0c0ca0"/><circle cx="320" cy="621" r="3" fill="#fe0"/></g>
          <g class="t11"><text x="358" y="637" fill="#d01010">X</text><text x="290" y="643" fill="#10c010">Y</text><text x="316" y="670" fill="#2020c0">Z</text></g>
          <g transform="translate(1140 105) scale(.33333)" stroke="#1c1c1c" stroke-width="5" stroke-linejoin="round">
            <path d="M183 55L355 103 245 180 72 132z" fill="#c6c6c6"/><path d="M72 132l173 48v185L72 318z" fill="#d9d9d9"/><path d="M245 180l110-77v182l-110 80z" fill="#cdcdcd"/>
            <g fill="none" stroke-width="7"><path d="M115 144v186M200 168v185M72 180l173 47 110-77M72 270l173 50 110-77M273 160v185M328 122v183M105 109l168 51M155 74l173 48M115 144L222 66M200 168L308 90"/></g>
          </g>
          <g class="cube"><text x="1187" y="193" fill="#7fd67f">-Y</text><text x="1233" y="189" fill="#e29090">-X</text><text x="1204" y="150" fill="#9a9ad8">+Z</text></g>
        </svg>
        <p class="info">LF1<br>Statische Analyse<br>Verschiebungen |u| [mm]</p>
        <p class="minmax">max |u| : 1.1 | min |u| : 0.0 mm</p>
      </section>

      <section class="summary">
        <div class="panelhead"><h2>Zusammenfassung</h2><button aria-label="Schließen"><svg><use href="#xx"/></svg></button></div>
        <nav class="submenu"><button>Gehe zu</button><button>Bearbeiten</button><button>Selektion</button><button>Ansicht</button><button>Einstellungen</button></nav>
        <div class="subtool">
          <div class="combo w1"><svg class="i16"><use href="#i-res"/></svg><select aria-label="Analyseart"><option>Statische Anal...</option></select><svg class="cv"><use href="#chev-d"/></svg></div>
          <button class="step" aria-label="Zurück"><svg><use href="#al"/></svg></button><button class="step off" aria-label="Weiter"><svg><use href="#ar"/></svg></button>
          <i class="sep grp2"></i>
          <div class="combo w2"><svg class="i16"><use href="#i-res"/></svg><select aria-label="Tabelle"><option>Übersicht</option></select><svg class="cv"><use href="#chev-d"/></svg></div>
          <button class="step off" aria-label="Zurück"><svg><use href="#al"/></svg></button><button class="step" aria-label="Weiter"><svg><use href="#ar"/></svg></button>
          <i class="sep"></i>
          <div class="combo w2"><i class="cy"></i><i class="cy"></i><b class="tag">G</b><span class="lf">LF1</span><select class="blank short" aria-label="Lastfall der Tabelle"><option></option></select><svg class="cv"><use href="#chev-d"/></svg></div>
          <button class="step off" aria-label="Zurück"><svg><use href="#al"/></svg></button><button class="step off" aria-label="Weiter"><svg><use href="#ar"/></svg></button>
          <i class="sep"></i>
          <button class="tb on" aria-label="Synchronisieren"><svg viewBox="0 0 20 20"><path d="M8 11H4V4h13v7h-2M10 8v8h3" fill="none" stroke="#666" stroke-width="1.500"/><path d="M9 9h5v4H9z" fill="#33508c"/></svg></button>
          <button class="more end"><svg><use href="#more"/></svg></button>
        </div>
        <div class="tablewrap">
          <div class="tableclip"><table>
            <colgroup><col class="c0"><col class="c1"><col class="c2"><col class="c2"><col></colgroup>
            <thead><tr class="strip"><td></td><td></td><td></td><td></td><td></td></tr><tr><td class="rowh"></td><th>Beschreibung</th><th>Wert</th><th>Einheit</th><th></th></tr></thead>
            <tbody>
              <tr class="group"><th colspan="5">Summe der Lasten und die Summe der Lagerkräfte</th></tr>
              <tr><td class="rowh"></td><td>Summe der Lasten in X</td><td class="num">0.00</td><td>kN</td><td></td></tr>
              <tr><td class="rowh"></td><td>Summe der Lagerkräfte in X</td><td class="num">0.00</td><td>kN</td><td></td></tr>
              <tr><td class="rowh"></td><td>Summe der Lasten in Y</td><td class="num">0.00</td><td>kN</td><td></td></tr>
              <tr><td class="rowh"></td><td>Summe der Lagerkräfte in Y</td><td class="num">0.00</td><td>kN</td><td></td></tr>
              <tr><td class="rowh"></td><td>Summe der Lasten in Z</td><td class="num">161.50</td><td>kN</td><td></td></tr>
              <tr><td class="rowh"></td><td></td><td></td><td></td><td></td></tr>
            </tbody>
          </table></div>
          <div class="vscroll"><svg><use href="#chev-d"/></svg><i></i><svg><use href="#chev-d"/></svg></div>
        </div>
        <div class="pager">
          <button aria-label="Erste"><svg viewBox="0 0 8 8"><path d="M1 0v8" stroke="#888" stroke-width="2"/><path d="M7 0v8L2 4z" fill="#888"/></svg></button><button aria-label="Vorige"><svg viewBox="0 0 8 8"><path d="M6 0v8L1 4z" fill="#888"/></svg></button>
          <span>1 von 1</span>
          <button aria-label="Nächste"><svg viewBox="0 0 8 8"><path d="M2 0v8l5-4z" fill="#888"/></svg></button><button aria-label="Letzte"><svg viewBox="0 0 8 8"><path d="M7 0v8" stroke="#888" stroke-width="2"/><path d="M1 0v8l5-4z" fill="#888"/></svg></button>
          <button class="tab">Zusammenfassung</button>
        </div>
      </section>
    </main>
  </div>

  <footer class="status">
    <span class="msg">Zeigt die Verformungsanimation an.</span>
    <button class="tog">FANG</button><button>RASTER</button><button class="tog">LRASTER</button><button class="tog">OFANG</button>
    <span class="cell s1"></span><span class="cell s2"></span><span class="cell s3">KS: Global XYZ</span><span class="cell s4">Ebene: XY</span><span class="cell s5"></span><span class="cell s5"></span><span class="cell s5"></span>
    <span class="cell s6"><svg viewBox="0 0 10 10"><path d="M7 1h2M4 4h2M7 4h2M1 7h2M4 7h2M7 7h2" stroke="#bbb" stroke-width="2"/></svg></span>
  </footer>

  <div class="hint">
    <svg viewBox="0 0 142 26"><path d="M18 0l30 26" stroke="#222" stroke-width="1.500"/></svg>
    <div class="callout">Animation</div>
  </div>

  <section class="steuer">
    <div class="sthead"><h2>Steuerpanel</h2><button aria-label="Schließen">×</button></div>
    <div class="stframe">
      <p class="sttitle">Globale Verformungen<br>|u| [mm]</p>
      <div class="stbody">
        <ol class="lbls"><li>1.1</li><li>1.0</li><li>0.9</li><li>0.8</li><li>0.7</li><li>0.6</li><li>0.5</li><li>0.4</li><li>0.3</li><li>0.2</li><li>0.1</li><li>0.0</li></ol>
        <ol class="cols"><li class="k10"></li><li class="k9"></li><li class="k8"></li><li class="k7"></li><li class="k6"></li><li class="k5"></li><li class="k4"></li><li class="k3"></li><li class="k2"></li><li class="k1"></li><li class="k0"></li></ol>
        <ol class="pcts"><li>10.46 %</li><li>15.27 %</li><li>11.30 %</li><li>8.75 %</li><li>7.61 %</li><li>7.05 %</li><li>6.79 %</li><li>6.67 %</li><li>7.17 %</li><li>8.04 %</li><li>10.88 %</li></ol>
        <div class="range"><input type="range" min="0" max="11" value="11" aria-label="Obergrenze"><input type="range" min="0" max="11" value="0" aria-label="Untergrenze"></div>
      </div>
      <div class="stopts"><button aria-label="Optionen"><svg><use href="#i-hand"/></svg></button><button class="sel" aria-label="Bereich"><svg><use href="#i-sld"/></svg></button></div>
    </div>
    <div class="sttabs"><button class="active" aria-label="Farbskala"><svg><use href="#i-leg"/></svg></button><button aria-label="Faktoren"><svg><use href="#i-bal"/></svg></button><button aria-label="Filter"><svg><use href="#i-flt"/></svg></button></div>
  </section>
</div>
<script src="plot.js"></script>
</body>
</html>
```

FILE: styles.css
```css
* { box-sizing: border-box; }
body { margin: 0; font: 11px/16px "Noto Sans", "Open Sans", sans-serif; color: #1a1a1a; background: #fff; overflow: hidden; }
h1, h2, p, ul, ol { margin: 0; padding: 0; list-style: none; font-weight: normal; }
button { font: inherit; color: inherit; background: none; border: 0; padding: 0; display: inline-flex; align-items: center; justify-content: center; flex: none; white-space: nowrap; }
select { font: inherit; color: inherit; appearance: none; background: transparent; border: 0; padding: 0; min-width: 0; }
svg { flex: none; display: block; }
.defs { position: absolute; width: 0; height: 0; }
.i16 { width: 16px; height: 16px; }

.window { position: relative; height: 100vh; display: flex; flex-direction: column; border: 1px solid #696969; background: #f7f7f7; }
.titlebar { height: 30px; flex: none; display: flex; align-items: center; gap: 6px; padding-left: 7px; background: #fff; }
.titlebar h1 { font-size: 11px; color: #000; }
.winbtns { margin-left: auto; display: flex; }
.winbtns button { width: 46px; height: 28px; }
.winbtns svg { width: 12px; height: 12px; }

.menubar { height: 20px; flex: none; display: flex; justify-content: space-between; background: #fff; }
.menus { display: flex; align-items: center; background: #f7f7f7; width: 902px; color: #000; }
.menus button { padding: 0 8px 0 7px; height: 20px; }
.mdi { width: 16px; height: 12px; margin-right: 1px; }
.mdibtns { display: flex; gap: 2px; padding: 1px 1px 0 0; color: #667; }
.mdibtns button { width: 17px; height: 18px; border: 1px solid #dcdcdc; }
.mdibtns svg { width: 9px; height: 9px; }

.toolbar { height: 28px; flex: none; display: flex; align-items: center; border-top: 1px solid #e2e2e2; }
.tb { width: 26px; height: 24px; border: 1px solid transparent; }
.tb svg { width: 19px; height: 19px; }
.tb.narrow { width: 21px; }
.on { background: #cce4f7; border: 1px solid #99cdf5; }
.hover { background: #e3f0fb; border: 1px solid #c0def5; }
.dd { width: 13px; height: 24px; color: #111; }
.dd svg { width: 8px; height: 5px; }
.dim { color: #8a8a8a; }
.grip { width: 9px; height: 20px; flex: none; background: radial-gradient(circle, #bbb 1px, transparent 1px) 3px 0 / 4px 4px repeat-y; }
.sep { width: 6px; height: 20px; flex: none; background: linear-gradient(#ccc, #ccc) 2px 0 / 1px 100% no-repeat; }
.sep.grp { width: 10px; height: 27px; background: linear-gradient(#d4d4d4, #d4d4d4) 1px 0 / 1px 100% no-repeat, radial-gradient(circle, #bbb 1px, transparent 1px) 5px 4px / 4px 4px repeat-y; }
.more { width: 14px; height: 24px; }
.more svg { width: 8px; height: 8px; }
.end { margin-left: auto; }

.combo { display: flex; align-items: center; height: 22px; padding: 0 5px; background: #e6e6f2; flex: none; }
.combo select { flex: 1; padding-left: 4px; }
.combo.grow { flex: 1; min-width: 100px; }
.combo .cv { width: 10px; height: 6px; color: #444; }
.combo .cy { width: 12px; height: 12px; background: #ccffff; margin-right: 3px; flex: none; }
.combo .tag { width: 30px; height: 13px; font-weight: normal; line-height: 13px; color: #fff; background: #000; text-align: center; flex: none; }
.combo .lf { padding: 0 5px; }
.combo .blank { background: #fff; height: 14px; margin: 0 5px 0 7px; }
.combo .short { flex: none; width: 66px; margin-right: auto; }
.toolbar .combo { margin-left: 3px; }
.toolbar .combo.cs { width: 118px; margin-left: 0; padding-right: 6px; }
.toolbar .cs select { padding-left: 0; }
.combo.disabled { background: #e3e3e3; color: #7a7a7a; }
.combo.disabled select { opacity: 1; color: #7a7a7a; }
.combo.disabled .cv { color: #aaa; }
.step { width: 15px; height: 22px; background: #e8e8f2; color: #000; margin-left: 1px; }
.step.off { background: #cfcfcf; color: #555; }
.step svg { width: 5px; height: 8px; }

.work { flex: 1; min-height: 0; display: flex; gap: 4px; }
.panelhead { height: 22px; flex: none; display: flex; align-items: center; background: #dae5f2; padding: 0 3px 0 6px; }
.panelhead h2 { font-size: 11px; font-weight: bold; color: #3c4450; margin-right: auto; }
.panelhead button { width: 20px; height: 20px; }
.panelhead svg { width: 9px; height: 9px; }

.navigator { width: 256px; flex: none; display: flex; flex-direction: column; padding-left: 1px; }
.navbody { flex: 1; min-height: 0; display: flex; flex-direction: column; border: solid #ccc; border-width: 2px 1px 0; margin-bottom: 1px; }
.navtool { display: flex; flex: none; padding: 2px 3px 0 2px; height: 32px; }
.navtool .combo { height: 22px; }
.tree { background: #fff; flex: none; }
.tree.upper { flex: 1; padding-top: 2px; }
.tree.lower { border-top: 4px solid #f2f2f2; padding: 2px 0 30px; }
.tree li { height: 18px; display: flex; align-items: center; padding-left: 5px; white-space: nowrap; }
.tree li.sub { padding-left: 25px; }
.tree label { display: flex; align-items: center; }
.tree .tw { width: 10px; height: 9px; color: #999; margin: 0 7px 2px 0; }
.tree .tw.open { color: #333; }
.tree li.leaf label { padding-left: 17px; }
.tree li.sub > label:first-child { padding-left: 17px; }
.tree input { appearance: none; width: 13px; height: 13px; margin: 0 6px 2px 0; border: 1px solid #333; background: #fff; position: relative; }
.tree input[type=radio] { border-radius: 50%; }
.tree input.part { background: #cce4f7; border-color: #1d5587; }
.tree input[type=checkbox]:checked::after { content: ""; position: absolute; left: 4px; top: 0; width: 4px; height: 8px; border: solid #333; border-width: 0 1px 1px 0; rotate: 40deg; }
.tree input[type=radio]:checked::after { content: ""; position: absolute; inset: 2px; border-radius: 50%; background: #333; }
.tree .ic { width: 16px; height: 16px; margin: 0 4px 2px 0; }
.tree small { font-size: 10px; }
.phi { font: 12px/16px "Liberation Sans", sans-serif; }
.navtabs { display: flex; height: 27px; flex: none; border-top: 1px solid #c4c4cc; border-bottom: 1px solid #d4d4d4; background: #f7f7f7; }
.navtabs button { width: 38px; height: 24px; background: #ebebeb; border: solid #c4c4cc; border-width: 0 1px 1px 0; }
.navtabs button.active { background: #fff; height: 26px; margin-top: -1px; }
.navtabs svg { width: 18px; height: 18px; }

.main { flex: 1; min-width: 0; display: flex; flex-direction: column; }
.view { flex: 1; min-height: 0; position: relative; background: #fff; overflow: hidden; }
.scene { width: 100%; height: 100%; }
.t11 { font: 11px "Noto Sans", sans-serif; }
.cube { font: bold 10px "Liberation Sans", sans-serif; }
.info, .minmax { position: absolute; left: 5px; color: #000; }
.info { top: 4px; line-height: 17px; }
.minmax { bottom: 5px; }
.hint { position: absolute; left: 752px; top: 100px; }
.hint svg { width: 142px; height: 26px; margin-bottom: -1px; }
.callout { padding: 5px 10px 7px; font: 27px/32px "Liberation Sans", Arial, sans-serif; color: #000; background: #fff; border: 1px solid #444; border-radius: 5px; box-shadow: 1px 2px 4px rgba(0, 0, 0, .5); }

.summary { flex: none; display: flex; flex-direction: column; padding-top: 3px; }
.submenu { height: 21px; display: flex; align-items: center; color: #000; }
.submenu button { padding: 0 8px; }
.subtool { height: 26px; display: flex; align-items: center; border-top: 1px solid #e2e2e2; padding-left: 2px; }
.subtool .sep { width: 9px; background-position: 4px 0; }
.w1 { width: 125px; }
.w2 { width: 230px; }
.subtool .sep.grp2 { width: 12px; height: 25px; background: linear-gradient(#ccc, #ccc) 9px 0 / 1px 100% no-repeat, linear-gradient(#ccc, #ccc) 4px 4px / 1px 18px no-repeat; }
.tablewrap { display: flex; border: 1px solid #c2c2c8; height: 143px; }
.tableclip { flex: 1; min-width: 0; overflow: hidden; }
table { width: 100%; border-collapse: collapse; table-layout: fixed; color: #000; }
.c0 { width: 60px; }
.c1 { width: 350px; }
.c2 { width: 80px; }
td, th { font-weight: normal; padding: 0 4px; height: 16px; line-height: 15px; border: solid #d9d9d9; border-width: 0 1px 1px 0; white-space: nowrap; background: #fffcf3; }
tbody tr:nth-child(odd) td { background: #fff9e6; }
thead .strip td { height: 9px; background: #e0e0e0; border-color: #fff; }
thead th, thead td.rowh { height: 32px; background: #efefef; vertical-align: bottom; border-color: #c8c8cc; }
td.rowh, thead td.rowh, tbody tr:nth-child(odd) td.rowh { background: #e0e0e0; border-bottom-color: #e0e0e0; }
.group th { background: #e9e9e9; text-align: left; }
.num { text-align: right; }
.vscroll { width: 17px; flex: none; display: flex; flex-direction: column; align-items: center; justify-content: space-between; background: #f0f0f0; padding: 5px 0; color: #333; }
.vscroll svg { width: 9px; height: 7px; }
.vscroll svg:first-child { rotate: 180deg; }
.vscroll i { width: 15px; height: 19px; background: #cdcdcd; margin: 4px 0 auto; }
.pager { height: 24px; display: flex; align-items: center; padding-bottom: 1px; color: #000; }
.pager button { width: 17px; height: 22px; }
.pager svg { width: 8px; height: 8px; }
.pager span { padding: 0 14px; }
.pager button.tab { width: auto; padding: 0 8px; background: #fff; border: 1px solid #c4c4cc; border-top: 0; }

.status { height: 22px; flex: none; display: flex; align-items: stretch; padding-left: 6px; color: #000; line-height: 22px; }
.msg { flex: 0 0 395px; }
.status button { border: 1px solid transparent; padding: 0 3px; height: 20px; margin: 1px 1px 0 0; }
.status .tog { background: #ececec; border-color: #b8b8b8 #ddd #ddd #b8b8b8; }
.cell { border-left: 1px solid #d0d0d0; padding-left: 4px; }
.s1 { width: 115px; flex: 1 1 115px; }
.s2 { width: 106px; flex: none; }
.s3 { width: 156px; flex: none; }
.s4 { width: 66px; flex: none; white-space: nowrap; }
.s5 { width: 76px; flex: none; }
.s6 { width: 19px; flex: none; display: flex; align-items: flex-end; padding-bottom: 1px; }
.s6 svg { width: 10px; height: 10px; }

.steuer { position: absolute; right: 22px; top: 412px; width: 267px; display: flex; flex-direction: column; background: #f7f7f7; box-shadow: 0 0 7px rgba(0, 0, 0, .5); color: #000; }
.sthead { height: 31px; display: flex; align-items: center; justify-content: space-between; padding: 0 2px 0 8px; background: #fff; color: #999; }
.sthead h2 { font-size: 11px; }
.sthead button { width: 18px; height: 18px; background: #e6e6e6; color: #f4f4f4; }
.stframe { border-left: 1px solid #c4c4c8; border-top: 1px solid #b8b8bc; border-bottom: 1px solid #c4c4c8; background: #fff; }
.sttitle { padding: 5px 10px; height: 40px; line-height: 13px; }
.stbody { display: flex; background: #f6f6f6; padding: 11px 48px 50px 69px; height: 361px; }
.stbody li { height: 26px; line-height: 16px; }
.lbls { width: 17px; text-align: right; }
.cols { width: 41px; padding-top: 8px; margin-left: 12px; }
.cols li { border-bottom: 1px solid #fff; border-top: 1px solid #eee; }
.pcts { width: 42px; text-align: right; padding-top: 13px; margin-left: 9px; white-space: nowrap; }
.k10 { background: #b30000; } .k9 { background: #f70000; } .k8 { background: #ffab00; } .k7 { background: #cfcf00; } .k6 { background: #ff0; } .k5 { background: #00ff00; } .k4 { background: #08e28a; } .k3 { background: #08f1f7; } .k2 { background: #0897ff; } .k1 { background: #0000ff; } .k0 { background: #0000aa; }
.range { display: grid; width: 21px; height: 297px; margin: 1px 0 0 auto; background: linear-gradient(#e4e4e4, #e4e4e4) 9px 0 / 4px 100% no-repeat; }
.range input { grid-area: 1 / 1; appearance: none; writing-mode: vertical-lr; direction: rtl; width: 21px; height: 297px; margin: 0; background: none; pointer-events: none; }
.range input::-webkit-slider-thumb { appearance: none; width: 21px; height: 10px; background: #0a78d8; pointer-events: auto; }
.stopts { display: flex; justify-content: flex-end; align-items: center; gap: 6px; padding-right: 7px; height: 33px; }
.stopts button { width: 25px; height: 21px; background: #cce4f7; }
.stopts .sel { border: 1px solid #1d5587; }
.stopts svg { width: 18px; height: 18px; }
.sttabs { display: flex; height: 26px; }
.sttabs button { width: 39px; height: 23px; background: #ebebeb; border: solid #c4c4cc; border-width: 0 1px 1px 0; }
.sttabs .active { background: #fff; height: 26px; margin-top: -1px; }
.sttabs svg { width: 15px; height: 15px; }
```

FILE: plot.js
```js
const NS = 'http://www.w3.org/2000/svg';
const colors = ['#0000aa', '#0000ff', '#0897ff', '#08f1f7', '#08e28a', '#00ff00', '#ffff00', '#cfcf00', '#ffab00', '#f70000', '#b30000'];

/* Rising isolines, outer edge towards the middle */
const rising = [
  '60,672 200,590 350,480 480,390 650,272 800,182 900,143 1000,133 1100,137 1200,150 1425,210 1665,275 1995,365 2290,442',
  '95,692 200,615 350,520 480,430 600,345 700,282 800,232 900,195 1000,182 1100,182 1245,200 1555,280 1925,375 2260,470',
  '145,702 250,640 370,555 500,455 600,385 700,320 800,270 900,235 1000,222 1125,225 1325,260 1525,320 1725,365 1925,405 2125,460 2240,494',
  '180,724 300,650 420,565 550,470 700,365 800,315 900,280 1000,262 1125,260 1325,295 1525,355 1725,405 1925,448 2125,495 2215,518',
  '215,742 350,655 500,540 600,465 700,405 800,355 900,318 1000,300 1125,297 1325,325 1525,380 1725,432 1925,480 2185,545',
  '255,762 400,670 560,545 700,450 850,375 950,345 1050,335 1125,335 1325,362 1525,410 1725,465 1925,518 2160,575',
  '300,785 450,690 600,570 750,470 870,415 1000,380 1125,370 1325,395 1525,445 1725,497 1925,550 2130,604',
  '358,810 480,725 620,610 740,520 850,460 970,425 1125,408 1325,430 1525,480 1725,535 1925,592 2090,640',
  '452,848 560,765 650,650 740,570 850,505 960,470 1125,450 1325,470 1525,515 1675,560 1825,625 1925,655 2030,687'
];
/* Falling isolines towards the supported corner */
const falling = [
  '600,890 700,838 850,790 1000,755 1125,725 1275,710 1475,708 1625,715 1775,730 1940,757',
  '695,908 800,850 900,805 1000,770 1125,740 1275,727 1425,727 1575,740 1725,760 1872,790',
  '762,916 870,852 970,808 1080,770 1125,757 1275,743 1425,745 1575,765 1725,793 1832,810',
  '820,922 930,858 1030,812 1125,777 1275,757 1425,760 1575,785 1802,823',
  '870,928 970,865 1070,820 1125,795 1275,767 1425,773 1575,800 1772,835',
  '922,934 1020,870 1125,815 1275,780 1425,786 1575,815 1737,850',
  '972,939 1060,880 1125,845 1205,810 1305,790 1425,800 1575,830 1707,862',
  '1022,943 1080,895 1125,865 1205,825 1325,802 1445,815 1575,845 1667,874',
  '1078,950 1125,905 1205,845 1325,822 1445,832 1555,855 1637,884'
];
const corner = ['1225,972 1295,925 1375,905 1455,910 1550,943', '1290,984 1375,952 1500,952'];
const core = '770,680 830,600 900,560 1000,520 1100,503 1200,503 1325,518 1445,550 1545,590 1590,625 1585,650 1525,660 1375,672 1225,685 1125,695 1000,715 850,732 800,722';
const outline = '2280,420 2225,475 2170,540 2115,600 2015,685 1925,752 1860,787 1790,818 1725,845 1655,870 1587,903 1480,955 1415,997 1235,965 1140,948 1030,935 930,928 770,910 610,884 460,842 365,805 260,755 150,700 100,680 45,643';

const parse = s => s.split(' ').map(p => p.split(',').map(Number));

function curve(points, closed) {
  const n = points.length;
  const at = i => closed ? points[(i + n) % n] : points[Math.max(0, Math.min(n - 1, i))];
  let d = 'M' + points[0];
  for (let i = 0; i < (closed ? n : n - 1); i++) {
    const [a, b, c, e] = [at(i - 1), at(i), at(i + 1), at(i + 2)];
    d += `C${b[0] + (c[0] - a[0]) / 6} ${b[1] + (c[1] - a[1]) / 6} ${c[0] - (e[0] - b[0]) / 6} ${c[1] - (e[1] - b[1]) / 6} ${c[0]} ${c[1]}`;
  }
  return d;
}
function add(parent, name, attrs) {
  const el = document.createElementNS(NS, name);
  for (const k in attrs) el.setAttribute(k, attrs[k]);
  document.getElementById(parent).append(el);
}
function band(points, fill) {
  add('bands', 'path', { d: curve(parse(points)) + 'L2500 1200L-50 1200Z', fill, stroke: '#111', 'stroke-width': 2 });
}

document.getElementById('platepath').setAttribute('d', curve(parse(outline)) + 'L908 37Z');
add('bands', 'path', { d: 'M-50 0H2500V1200H-50Z', fill: colors[0] });
rising.forEach((line, i) => band(line, colors[i + 1]));
add('bands', 'path', { d: curve(parse(core), true), fill: colors[10], stroke: '#111', 'stroke-width': 2 });
falling.forEach((line, i) => band(line, colors[8 - i]));
corner.forEach((line, i) => band(line, colors[i + 1]));

/* Mesh lines sag with the plate between their two ends */
for (let k = 1; k < 10; k++) {
  const x = 908 - 87 * k, y = 37 + 61 * k;
  add('grid', 'path', { d: `M${x} ${y}Q${x + 500} ${y + 185} ${x + 1230} ${y + 344}`, 'stroke-dasharray': k === 4 || k === 9 ? '3 7' : 'none' });
}
for (let j = 1; j < 9; j++) {
  const x = 908 + 137 * j, y = 37 + 38 * j;
  add('grid', 'path', { d: `M${x} ${y}Q${x - 390} ${y + 310} ${x - 783} ${y + 549}`, 'stroke-dasharray': '3 7' });
}
for (const [x, y] of parse('908,37 2280,420 2003,342 218,520 45,643 1140,948 1313,827 1587,903 1415,1025')) {
  add('nodes', 'rect', { x: x - 6, y: y - 6, width: 13, height: 13 });
}
```
